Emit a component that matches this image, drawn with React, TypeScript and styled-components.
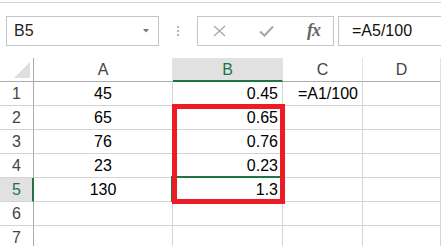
import React from 'react';
import styled, { createGlobalStyle } from 'styled-components';

const GlobalStyle = createGlobalStyle`
  html, body {
    margin: 0;
    padding: 0;
    background: #ffffff;
  }
  body {
    font-family: 'Liberation Sans', Arial, sans-serif;
    overflow: hidden;
  }
`;

const GREEN = '#217346';

const Sheet = styled.div`
  width: 441px;
  height: 246px;
  overflow: hidden;
  background: #ffffff;
`;

const RibbonEdge = styled.div`
  height: 2px;
  border-bottom: 1px solid #d4d4d4;
`;

const FormulaRow = styled.div`
  display: flex;
  align-items: stretch;
  height: 30px;
  margin-top: 13px;
  padding-left: 6px;
`;

const NameBox = styled.div`
  box-sizing: border-box;
  width: 153px;
  border: 1px solid #c6c6c6;
  display: flex;
  align-items: center;
  justify-content: space-between;
  padding: 0 9px 0 7px;
  font-size: 16px;
  color: #222;
`;

const Grip = styled.div`
  width: 38px;
  display: flex;
  flex-direction: column;
  align-items: center;
  justify-content: center;
  gap: 2px;
  & span {
    width: 2px;
    height: 2px;
    background: #b4b4b4;
  }
`;

const FnBox = styled.div`
  box-sizing: border-box;
  width: 137px;
  border: 1px solid #c6c6c6;
  display: flex;
  align-items: center;
  justify-content: space-between;
  padding: 0 13px 0 15px;
`;

const FxLabel = styled.span`
  font-family: 'Liberation Serif', 'Times New Roman', serif;
  font-style: italic;
  font-weight: bold;
  font-size: 18px;
  color: #666;
  letter-spacing: -1px;
  margin-top: -2px;
`;

const FormulaInput = styled.div`
  box-sizing: border-box;
  flex: 1;
  margin-left: 4px;
  margin-right: -2px;
  border: 1px solid #c6c6c6;
  display: flex;
  align-items: center;
  padding-left: 13px;
  font-size: 16px;
  color: #111;
`;

const Grid = styled.div`
  position: relative;
  margin-top: 12px;
  display: grid;
  grid-template-columns: 34px 139px 110px 80px 1fr;
  grid-auto-rows: 24px;
`;

const Corner = styled.div`
  box-sizing: border-box;
  border-right: 1px solid #ababab;
  border-bottom: 1px solid #ababab;
  display: flex;
  align-items: flex-end;
  justify-content: flex-end;
  padding: 0 3px 3px 0;
`;

const ColHead = styled.div<{ $active?: boolean }>`
  box-sizing: border-box;
  display: flex;
  align-items: center;
  justify-content: center;
  font-size: 16px;
  color: ${p => (p.$active ? GREEN : '#444')};
  background: ${p => (p.$active ? '#e1e1e1' : '#ffffff')};
  border-right: 1px solid ${p => (p.$active ? '#e1e1e1' : '#e3e3e3')};
  border-bottom: ${p => (p.$active ? `2px solid ${GREEN}` : '1px solid #ababab')};
  padding-top: 1px;
`;

const RowHead = styled.div<{ $active?: boolean }>`
  box-sizing: border-box;
  display: flex;
  align-items: center;
  justify-content: center;
  font-size: 16px;
  color: ${p => (p.$active ? GREEN : '#444')};
  background: ${p => (p.$active ? '#e1e1e1' : '#ffffff')};
  border-right: ${p => (p.$active ? `2px solid ${GREEN}` : '1px solid #ababab')};
  border-bottom: 1px solid #d4d4d4;
  padding-left: ${p => (p.$active ? '1px' : '0')};
`;

const Cell = styled.div<{ $align?: 'left' | 'center' | 'right'; $selected?: boolean }>`
  position: relative;
  box-sizing: border-box;
  display: flex;
  align-items: center;
  justify-content: ${p =>
    p.$align === 'center' ? 'center' : p.$align === 'right' ? 'flex-end' : 'flex-start'};
  padding: 1px 4px 0;
  font-size: 16px;
  color: #000;
  border-right: 1px solid #d4d4d4;
  border-bottom: 1px solid #d4d4d4;
  white-space: nowrap;
  ${p =>
    p.$selected &&
    `
    &::after {
      content: '';
      position: absolute;
      top: -2px;
      left: -2px;
      right: -1px;
      bottom: -1px;
      border: 2px solid ${GREEN};
    }
  `}
`;

const Highlight = styled.div`
  position: absolute;
  left: 172px;
  top: 46px;
  width: 113px;
  height: 100px;
  box-sizing: border-box;
  border: 5px solid #ed1c24;
  pointer-events: none;
`;

type Row = { n: number; a: string; b: string; c: string };

const rows: Row[] = [
  { n: 1, a: '45', b: '0.45', c: '=A1/100' },
  { n: 2, a: '65', b: '0.65', c: '' },
  { n: 3, a: '76', b: '0.76', c: '' },
  { n: 4, a: '23', b: '0.23', c: '' },
  { n: 5, a: '130', b: '1.3', c: '' },
  { n: 6, a: '', b: '', c: '' },
  { n: 7, a: '', b: '', c: '' },
];

const columns = ['A', 'B', 'C', 'D'];

const App: React.FC = () => {
  return (
    <Sheet>
      <GlobalStyle />
      <RibbonEdge />
      <FormulaRow>
        <NameBox>
          <span>B5</span>
          <svg width="6" height="4" viewBox="0 0 6 4">
            <polygon points="0,0 6,0 3,3.5" fill="#777" />
          </svg>
        </NameBox>
        <Grip>
          <span />
          <span />
          <span />
        </Grip>
        <FnBox>
          <svg width="13" height="12" viewBox="0 0 13 12">
            <path d="M1 1 L12 11 M12 1 L1 11" stroke="#a6a6a6" strokeWidth="1.2" fill="none" />
          </svg>
          <svg width="15" height="12" viewBox="0 0 15 12">
            <path d="M1 6.5 L5.5 10.5 L14 1.5" stroke="#a6a6a6" strokeWidth="2" fill="none" />
          </svg>
          <FxLabel>fx</FxLabel>
        </FnBox>
        <FormulaInput>=A5/100</FormulaInput>
      </FormulaRow>
      <Grid>
        <Corner>
          <svg width="16" height="16" viewBox="0 0 16 16">
            <polygon points="16,0 16,16 0,16" fill="#dfdfdf" />
          </svg>
        </Corner>
        {columns.map(c => (
          <ColHead key={c} $active={c === 'B'}>
            {c}
          </ColHead>
        ))}
        {rows.map(r => (
          <React.Fragment key={r.n}>
            <RowHead $active={r.n === 5}>{r.n}</RowHead>
            <Cell $align="center">{r.a}</Cell>
            <Cell $align="right" $selected={r.n === 5}>
              {r.b}
            </Cell>
            <Cell $align="right">{r.c}</Cell>
            <Cell />
          </React.Fragment>
        ))}
        <Highlight />
      </Grid>
    </Sheet>
  );
};

export default App;
